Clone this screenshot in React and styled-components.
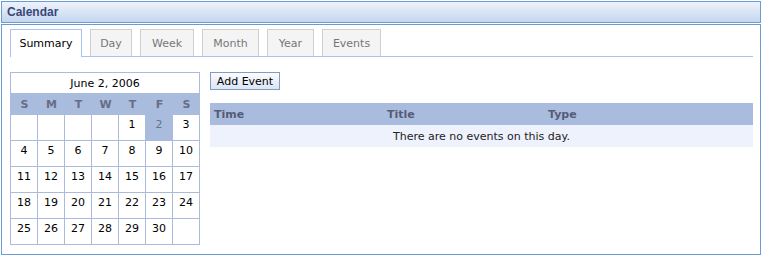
import React from 'react'
import styled, { createGlobalStyle } from 'styled-components'

const GlobalStyle = createGlobalStyle`
  body {
    margin: 0;
    background: #fff;
    font-family: "DejaVu Sans", Verdana, sans-serif;
    font-size: 11px;
    color: #000;
  }
`

const Frame = styled.div`
  width: 760px;
  margin: 1px 0 0 1px;
`

const TitleBar = styled.div`
  height: 22px;
  box-sizing: border-box;
  border: 1px solid #6b9bd3;
  background: linear-gradient(#eef3fb, #c4d7ef);
  padding-left: 5px;
  display: flex;
  align-items: center;
  font-family: "Liberation Sans", Arial, sans-serif;
  font-size: 12px;
  font-weight: bold;
  color: #3b4777;
`

const Panel = styled.div`
  margin-top: 1px;
  box-sizing: border-box;
  border: 1px solid #6b9bd3;
  padding: 4px 7px 9px 8px;
  box-shadow: 0 3px 0 -1px #a6a6a6, 0 4px 1px -1px #d2d2d2;
`

const TabStrip = styled.div`
  display: flex;
  gap: 8px;
  height: 28px;
  box-sizing: border-box;
  border-bottom: 1px solid #a9c5ee;
`

const Tab = styled.div`
  box-sizing: border-box;
  width: ${({ $width }) => $width}px;
  height: ${({ $active }) => ($active ? '28px' : '27px')};
  display: flex;
  align-items: center;
  justify-content: center;
  border: 1px solid ${({ $active }) => ($active ? '#a9c5ee' : '#cfcfcf')};
  border-bottom: none;
  background: ${({ $active }) => ($active ? '#fff' : '#f4f4f4')};
  color: ${({ $active }) => ($active ? '#000' : '#777')};
`

const Body = styled.div`
  display: flex;
  gap: 10px;
  margin-top: 15px;
`

const Month = styled.div`
  display: grid;
  grid-template-columns: repeat(7, 27px);
  width: 190px;
  box-sizing: border-box;
  border-left: 1px solid #aabbdd;
  border-top: 1px solid #aabbdd;
`

const MonthTitle = styled.div`
  grid-column: 1 / -1;
  height: 20px;
  box-sizing: border-box;
  border-right: 1px solid #aabbdd;
  display: flex;
  align-items: center;
  justify-content: center;
`

const DayName = styled.div`
  height: 22px;
  background: #aabcde;
  display: flex;
  align-items: center;
  justify-content: center;
  font-weight: bold;
  color: #666d85;
`

const DayCell = styled.div`
  height: 26px;
  box-sizing: border-box;
  border-right: 1px solid #aabbdd;
  border-bottom: 1px solid #aabbdd;
  padding-top: 3px;
  text-align: center;
  background: ${({ $selected }) => ($selected ? '#aabcde' : '#fff')};
  color: ${({ $selected }) => ($selected ? '#68738f' : '#000')};
`

const Events = styled.div`
  flex: 1;
  display: flex;
  flex-direction: column;
  align-items: flex-start;
`

const Button = styled.button`
  height: 18px;
  width: 70px;
  padding: 0;
  box-sizing: border-box;
  border: 1px solid #7f9dc4;
  background: linear-gradient(#fbfdff, #dbe5f3);
  font-family: inherit;
  font-size: 11px;
  color: #000;
`

const EventTable = styled.div`
  align-self: stretch;
  margin-top: 13px;
`

const HeadRow = styled.div`
  display: grid;
  grid-template-columns: 173px 161px 1fr;
  height: 22px;
  align-items: center;
  background: #aabcde;
  font-weight: bold;
  color: #555c78;

  & > span {
    padding-left: 4px;
  }
`

const EmptyRow = styled.div`
  height: 22px;
  display: flex;
  align-items: center;
  justify-content: center;
  background: #eef2fd;
  color: #222;
`

const tabs = [
  { label: 'Summary', width: 72 },
  { label: 'Day', width: 42 },
  { label: 'Week', width: 54 },
  { label: 'Month', width: 57 },
  { label: 'Year', width: 47 },
  { label: 'Events', width: 59 },
]
const dayNames = ['S', 'M', 'T', 'W', 'T', 'F', 'S']
const days = [
  null, null, null, null, 1, 2, 3,
  4, 5, 6, 7, 8, 9, 10,
  11, 12, 13, 14, 15, 16, 17,
  18, 19, 20, 21, 22, 23, 24,
  25, 26, 27, 28, 29, 30, null,
]

const App = () => (
  <Frame>
    <GlobalStyle />
    <TitleBar>Calendar</TitleBar>
    <Panel>
      <TabStrip>
        {tabs.map((t) => (
          <Tab key={t.label} $width={t.width} $active={t.label === 'Summary'}>
            {t.label}
          </Tab>
        ))}
      </TabStrip>
      <Body>
        <Month>
          <MonthTitle>June 2, 2006</MonthTitle>
          {dayNames.map((d, i) => (
            <DayName key={i}>{d}</DayName>
          ))}
          {days.map((d, i) => (
            <DayCell key={i} $selected={d === 2}>
              {d}
            </DayCell>
          ))}
        </Month>
        <Events>
          <Button>Add Event</Button>
          <EventTable>
            <HeadRow>
              <span>Time</span>
              <span>Title</span>
              <span>Type</span>
            </HeadRow>
            <EmptyRow>There are no events on this day.</EmptyRow>
          </EventTable>
        </Events>
      </Body>
    </Panel>
  </Frame>
)

export default App
